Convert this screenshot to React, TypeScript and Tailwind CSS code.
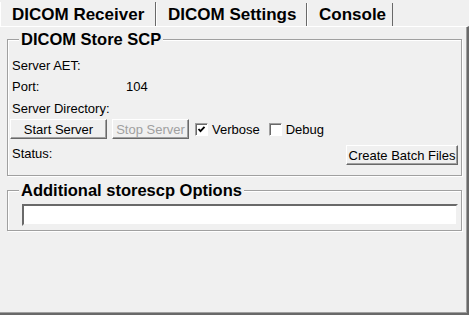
import React from "react";

const sans = "font-['Liberation_Sans',Arial,sans-serif]";

function Tab({ label, selected, width }: { label: string; selected?: boolean; width: string }) {
  return (
    <div
      className={`${width} flex items-center border-r border-r-[#696969] border-l border-l-white ${
        selected ? "h-[24px] pl-[11px]" : "h-[23px] pl-[11px]"
      } text-[17px] font-bold text-black leading-none`}
    >
      {label}
    </div>
  );
}

function Button({ label, disabled, width }: { label: string; disabled?: boolean; width: string }) {
  return (
    <div
      className={`${width} h-[20px] flex items-center justify-center bg-[#f0f0f0] border border-t-white border-l-white border-r-[#696969] border-b-[#696969] shadow-[inset_-1px_-1px_0_#a0a0a0] text-[13px] leading-none ${
        disabled ? "text-[#a0a0a0]" : "text-black"
      }`}
    >
      {label}
    </div>
  );
}

function Check({ checked }: { checked?: boolean }) {
  return (
    <div className="w-[13px] h-[13px] bg-white border border-t-[#a0a0a0] border-l-[#a0a0a0] border-r-white border-b-white shadow-[inset_1px_1px_0_#696969] flex items-center justify-center">
      {checked && (
        <svg width="9" height="9" viewBox="0 0 9 9">
          <path d="M1.5 4 L3.5 6.2 L7.5 1.8" stroke="#000" strokeWidth="1.8" fill="none" />
        </svg>
      )}
    </div>
  );
}

export default function App() {
  return (
    <div className={`w-[469px] h-[315px] bg-[#f0f0f0] overflow-hidden flex flex-col ${sans}`}>
      <div className="h-[26px] flex items-end">
        <Tab label="DICOM Receiver" selected width="w-[156px]" />
        <Tab label="DICOM Settings" width="w-[151px]" />
        <Tab label="Console" width="w-[86px]" />
      </div>
      <div className="flex-1 border-t border-t-white border-r-2 border-r-[#696969] border-b-2 border-b-[#696969] shadow-[inset_-1px_-1px_0_#a0a0a0] pl-[7px] pr-[5px]">
        <fieldset className="mt-[2px] border border-[#a0a0a0] shadow-[1px_1px_0_white,inset_1px_1px_0_white] pl-[4px] pr-[3px] pb-[10px]">
          <legend className="ml-[7px] px-[2px] bg-[#f0f0f0] text-[16.5px] font-bold leading-[21px] text-black">
            DICOM Store SCP
          </legend>
          <div className="flex flex-col text-[13px] text-black leading-none pt-[5px]">
            <div className="h-[21px] flex items-center">Server AET:</div>
            <div className="h-[21px] flex items-center">
              <span className="w-[114px]">Port:</span>
              <span>104</span>
            </div>
            <div className="h-[22px] flex items-center">Server Directory:</div>
            <div className="h-[20px] flex items-center -ml-[2px]">
              <Button label="Start Server" width="w-[97px]" />
              <div className="ml-[5px]">
                <Button label="Stop Server" disabled width="w-[77px]" />
              </div>
              <div className="ml-[6px] flex items-center gap-[4px]">
                <Check checked />
                <span>Verbose</span>
              </div>
              <div className="ml-[9px] flex items-center gap-[4px]">
                <Check />
                <span>Debug</span>
              </div>
            </div>
            <div className="mt-[6px] h-[20px] flex items-center justify-between">
              <span className="-mt-[4px]">Status:</span>
              <Button label="Create Batch Files" width="w-[112px]" />
            </div>
          </div>
        </fieldset>
        <fieldset className="mt-[4px] border border-[#a0a0a0] shadow-[1px_1px_0_white,inset_1px_1px_0_white] pl-[4px] pr-[3px] pb-[4px]">
          <legend className="ml-[7px] px-[2px] bg-[#f0f0f0] text-[16.5px] font-bold leading-[21px] text-black">
            Additional storescp Options
          </legend>
          <div className="pt-[3px] pl-[10px]">
            <div className="h-[22px] bg-white border-2 border-t-[#696969] border-l-[#696969] border-r-[#f0f0f0] border-b-[#f0f0f0]" />
          </div>
        </fieldset>
      </div>
    </div>
  );
}
